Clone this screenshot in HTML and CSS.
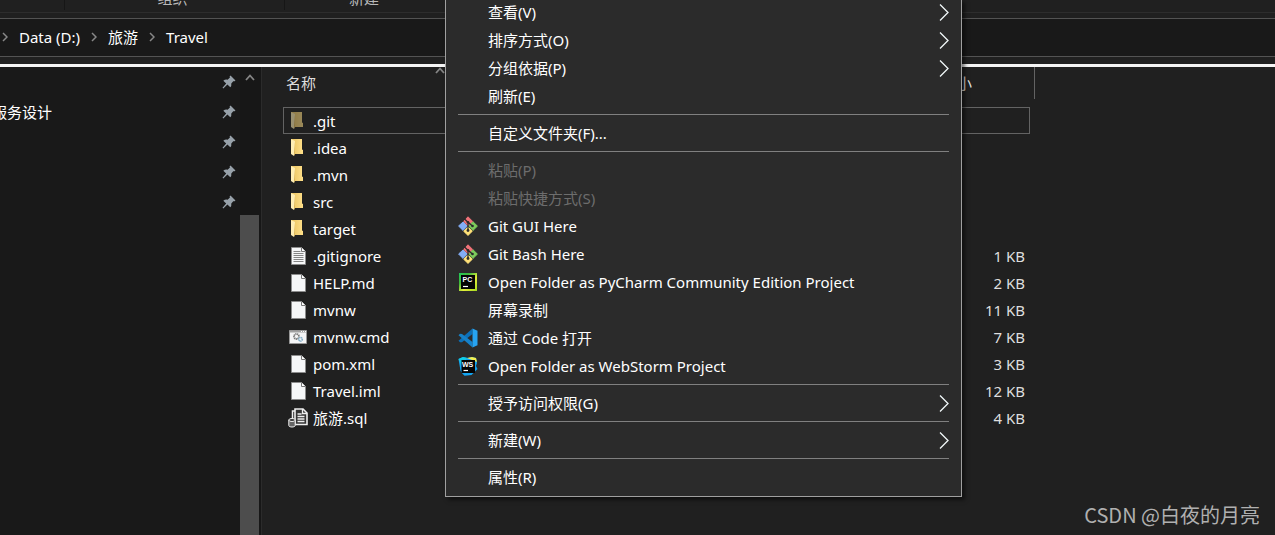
FILE: index.html
```html
<!DOCTYPE html>
<html lang="zh-CN">
<head>
<meta charset="utf-8">
<title>Travel</title>
<link rel="stylesheet" href="styles.css">
</head>
<body>
<svg class="defs" aria-hidden="true">
  <defs>
    <linearGradient id="fold" x1="0" x2="1" y1="0" y2="0"><stop offset="0" stop-color="#e9c25e"/><stop offset="1" stop-color="#ffe08a"/></linearGradient>
    <linearGradient id="pc" x1="0" x2="1" y1="0" y2="1"><stop offset="0" stop-color="#21c95a"/><stop offset=".3" stop-color="#3fb93a"/><stop offset=".6" stop-color="#e4ee3a"/><stop offset="1" stop-color="#a5d920"/></linearGradient>
    <symbol id="i-pin" viewBox="0 0 14 14"><path d="M8.500 .5 13.500 5.500 12 6.500 11.500 6 9.300 8.500Q9.700 10.800 8.300 12.300L5.400 9.600 1.300 13.500 .5 12.800 4.200 8.600 1.300 5.800Q3.400 4 5.600 4.700L8 2.500 7.500 1.700Z" fill="#98a2aa"/></symbol>
    <symbol id="i-folder" viewBox="0 0 12 17"><path d="M0 0h11v10.500l1 .5v4H0z" fill="url(#fold)"/><path d="M0 0 4 2v12L3 17 0 15z" fill="#ffeeb4"/><path d="M4 2v12l-1 3V15z" fill="#d9b04e"/></symbol>
    <symbol id="i-file" viewBox="0 0 15 18"><path d="M.5.5h10l4 4v13H.5z" fill="#f6f7f8" stroke="#8c8c8c"/><path d="M10.500.5v4h4" fill="#fff" stroke="#777"/></symbol>
    <symbol id="i-text" viewBox="0 0 15 18"><use href="#i-file"/><path d="M2.500 4.500h7M2.500 6.500h10M2.500 8.500h10M2.500 10.500h10M2.500 12.500h10M2.500 14.500h10" stroke="#858585"/></symbol>
    <symbol id="i-cmd" viewBox="0 0 18 14"><path d="M.5.5h17v13H.5z" fill="#f4f5f6" stroke="#979797"/><path d="M1 1h16v1.500H1z" fill="#a2a2a2"/><path d="M12 1.500h1M14 1.500h1M16 1.500h1" stroke="#fff"/><circle cx="7.500" cy="6.500" r="2.500" fill="none" stroke="#777" stroke-width="1.800" stroke-dasharray="1.200 .5"/><circle cx="11.500" cy="9.300" r="1.800" fill="none" stroke="#82aec8" stroke-width="1.600" stroke-dasharray="1.200 .4"/></symbol>
    <symbol id="i-sql" viewBox="0 0 20 20"><path d="M7 1h8l4 4v11.500H7z" fill="#333" stroke="#eee" stroke-width="1.600"/><path d="M14.500 1v4.500H19M9.500 6h4M9.500 8.500h7M9.500 11h7M9.500 13.500h7" fill="none" stroke="#eee" stroke-width="1.300"/><path d="M7 3H4.500v8" fill="none" stroke="#eee" stroke-width="1.500"/><path d="M.8 12v5.500c0 2 6.400 2 6.400 0V12z" fill="#666" stroke="#eee"/><ellipse cx="4" cy="12" rx="3.200" ry="1.500" fill="#333" stroke="#eee"/></symbol>
    <symbol id="i-arrow" viewBox="0 0 10 17"><path d="M1 .5 9 8.500 1 16.500" fill="none" stroke="#f2f8fa" stroke-width="1.300"/></symbol>
    <symbol id="i-crumb" viewBox="0 0 6 10"><path d="M1 1 5 5 1 9" fill="none" stroke="#888" stroke-width="1.500"/></symbol>
    <symbol id="i-up" viewBox="0 0 10 7"><path d="M1 6 5 1.500 9 6" fill="none" stroke="#858585" stroke-width="1.800"/></symbol>
    <symbol id="i-git" viewBox="0 0 20 20"><g stroke-linejoin="round" stroke-width="1"><path d="m10 .8 4.600 4.600L10 9.600 5.700 5.400z" fill="#f07278" stroke="#f07278"/><path d="M5 6 9.200 10.200 5 14.400.6 10z" fill="#83adf5" stroke="#83adf5"/><path d="m15 5.800 4.400 4.300-4.400 4.300-4.200-4.300z" fill="#7dcb5c" stroke="#7dcb5c"/><path d="m10 11 4.300 4.200L10 19.400l-4.300-4.200z" fill="#ffe178" stroke="#ffe178"/></g><path d="M6.500 3 10 6.300v8.500M10 6.300 14.500 10" fill="none" stroke="#2b2b2b" stroke-width="1.300"/><circle cx="10" cy="6.300" r="1.300" fill="#2b2b2b"/><circle cx="10" cy="14.500" r="1.400" fill="#2b2b2b"/><circle cx="14.500" cy="10" r="1.300" fill="#2b2b2b"/></symbol>
    <symbol id="i-pc" viewBox="0 0 20 20"><path d="M1 1h18v18H1z" fill="url(#pc)"/><path d="M3 3h14v14H3z" fill="#050505"/><path d="M5 14.500h5" stroke="#fff" stroke-width="1.200"/><text x="4.500" y="9.500" class="logo-text">PC</text></symbol>
    <symbol id="i-code" viewBox="0 0 20 20"><path d="M14.500.5V6L4 14.200l-2 .1L.5 12.800z" fill="#0d70b8"/><path d="M14.500 19.500V14L4 5.900l-2-.1L.5 7.300z" fill="#1681c9"/><path d="M14.500.5 19.500 2.800v14.400l-5 2.300z" fill="#27a4f2"/></symbol>
    <symbol id="i-ws" viewBox="0 0 20 20"><path d="M.5 3 5 1l5 1 4-1 4 1 1 5-1 3 1.500 3-2 2-1 1-3 3-7 .8-2-2-2-3z" fill="#12a5f3"/><path d="m9 2 5-1 4 1 1 4-5-2z" fill="#f4ee50"/><path d="m.5 3 4.500-2 4 1-5 8z" fill="#10cce5"/><path d="M3.500 4h13.500v13H3.500z" fill="#050505"/><path d="M5.500 14.500h4.500" stroke="#fff" stroke-width="1.200"/><text x="4" y="10.500" class="logo-text">WS</text></symbol>
  </defs>
</svg>

<div class="window">
  <header class="ribbon">
    <span class="group group-first"></span>
    <span class="group group-wide">组织</span>
    <span class="group group-last">新建</span>
  </header>
  <nav class="address">
    <svg class="crumb"><use href="#i-crumb"/></svg><a href="#">Data (D:)</a>
    <svg class="crumb"><use href="#i-crumb"/></svg><a href="#">旅游</a>
    <svg class="crumb"><use href="#i-crumb"/></svg><a href="#">Travel</a>
  </nav>
  <div class="body">
    <aside class="sidebar">
      <ul class="pins">
        <li><span></span><svg class="pin"><use href="#i-pin"/></svg></li>
        <li><span class="cut">服务设计</span><svg class="pin"><use href="#i-pin"/></svg></li>
        <li><span></span><svg class="pin"><use href="#i-pin"/></svg></li>
        <li><span></span><svg class="pin"><use href="#i-pin"/></svg></li>
        <li><span></span><svg class="pin"><use href="#i-pin"/></svg></li>
      </ul>
      <div class="scrollbar"><svg class="up"><use href="#i-up"/></svg><div class="thumb"></div></div>
    </aside>
    <main class="files">
      <table>
        <colgroup><col class="col-name"><col><col class="col-size"><col class="col-end"></colgroup>
        <thead><tr><th class="name">名称<svg class="sort"><use href="#i-up"/></svg></th><th></th><th class="size-head" colspan="2">大小</th></tr></thead>
        <tbody>
          <tr class="selected"><td><span class="entry"><svg class="folder dim"><use href="#i-folder"/></svg>.git</span></td><td></td><td></td><td></td></tr>
          <tr><td><span class="entry"><svg class="folder"><use href="#i-folder"/></svg>.idea</span></td><td></td><td></td><td></td></tr>
          <tr><td><span class="entry"><svg class="folder"><use href="#i-folder"/></svg>.mvn</span></td><td></td><td></td><td></td></tr>
          <tr><td><span class="entry"><svg class="folder"><use href="#i-folder"/></svg>src</span></td><td></td><td></td><td></td></tr>
          <tr><td><span class="entry"><svg class="folder"><use href="#i-folder"/></svg>target</span></td><td></td><td></td><td></td></tr>
          <tr><td><span class="entry"><svg class="file"><use href="#i-text"/></svg>.gitignore</span></td><td></td><td class="size">1 KB</td><td></td></tr>
          <tr><td><span class="entry"><svg class="file"><use href="#i-file"/></svg>HELP.md</span></td><td></td><td class="size">2 KB</td><td></td></tr>
          <tr><td><span class="entry"><svg class="file"><use href="#i-file"/></svg>mvnw</span></td><td></td><td class="size">11 KB</td><td></td></tr>
          <tr><td><span class="entry"><svg class="cmd"><use href="#i-cmd"/></svg>mvnw.cmd</span></td><td></td><td class="size">7 KB</td><td></td></tr>
          <tr><td><span class="entry"><svg class="file"><use href="#i-file"/></svg>pom.xml</span></td><td></td><td class="size">3 KB</td><td></td></tr>
          <tr><td><span class="entry"><svg class="file"><use href="#i-file"/></svg>Travel.iml</span></td><td></td><td class="size">12 KB</td><td></td></tr>
          <tr><td><span class="entry"><svg class="sql"><use href="#i-sql"/></svg>旅游.sql</span></td><td></td><td class="size">4 KB</td><td></td></tr>
        </tbody>
      </table>
    </main>
  </div>
</div>

<div class="menu" role="menu">
  <button role="menuitem"><span class="icon"></span><span class="label">查看(V)</span><svg class="arrow"><use href="#i-arrow"/></svg></button>
  <button role="menuitem"><span class="icon"></span><span class="label">排序方式(O)</span><svg class="arrow"><use href="#i-arrow"/></svg></button>
  <button role="menuitem"><span class="icon"></span><span class="label">分组依据(P)</span><svg class="arrow"><use href="#i-arrow"/></svg></button>
  <button role="menuitem"><span class="icon"></span><span class="label">刷新(E)</span></button>
  <hr>
  <button role="menuitem"><span class="icon"></span><span class="label">自定义文件夹(F)...</span></button>
  <hr>
  <button role="menuitem" disabled><span class="icon"></span><span class="label">粘贴(P)</span></button>
  <button role="menuitem" disabled><span class="icon"></span><span class="label">粘贴快捷方式(S)</span></button>
  <button role="menuitem"><svg class="icon"><use href="#i-git"/></svg><span class="label">Git GUI Here</span></button>
  <button role="menuitem"><svg class="icon"><use href="#i-git"/></svg><span class="label">Git Bash Here</span></button>
  <button role="menuitem"><svg class="icon"><use href="#i-pc"/></svg><span class="label">Open Folder as PyCharm Community Edition Project</span></button>
  <button role="menuitem"><span class="icon"></span><span class="label">屏幕录制</span></button>
  <button role="menuitem"><svg class="icon"><use href="#i-code"/></svg><span class="label">通过 Code 打开</span></button>
  <button role="menuitem"><svg class="icon"><use href="#i-ws"/></svg><span class="label">Open Folder as WebStorm Project</span></button>
  <hr>
  <button role="menuitem"><span class="icon"></span><span class="label">授予访问权限(G)</span><svg class="arrow"><use href="#i-arrow"/></svg></button>
  <hr>
  <button role="menuitem"><span class="icon"></span><span class="label">新建(W)</span><svg class="arrow"><use href="#i-arrow"/></svg></button>
  <hr>
  <button role="menuitem"><span class="icon"></span><span class="label">属性(R)</span></button>
</div>
<div class="watermark">CSDN @白夜的月亮</div>
</body>
</html>
```
FILE: styles.css
```css
* { box-sizing: border-box; }
body {
  margin: 0;
  background: #202020;
  color: #fff;
  font: 15px/20px "Noto Sans", "Noto Sans CJK SC", sans-serif;
  overflow: hidden;
}
svg { display: block; flex: none; }
.defs { position: absolute; width: 0; height: 0; }
.logo-text { font: bold 7px "Liberation Sans", sans-serif; fill: #fff; }

.window { display: flex; flex-direction: column; height: 100vh; }

.ribbon {
  display: flex;
  align-items: flex-end;
  height: 13px;
  border-bottom: 1px solid #2d2d2d;
  color: #b8b8b8;
  overflow: hidden;
}
.group { height: 22px; margin-bottom: 2px; text-align: center; border-right: 1px solid #161616; }
.group-first { width: 65px; }
.group-wide { width: 220px; padding-right: 4px; }
.group-last { width: 158px; border: 0; }

.address {
  display: flex;
  align-items: center;
  gap: 11px;
  height: 39px;
  margin: 5px 0 7px;
  padding: 0 0 2px 2px;
  background: #191919;
  border-top: 1px solid #535353;
  border-bottom: 1px solid #535353;
}
.address a { color: #fff; text-decoration: none; }
.crumb { width: 6px; height: 10px; }

.body { display: flex; flex: 1; min-height: 0; border-top: 3px solid #f4f4f4; }
.sidebar { display: flex; flex: none; width: 262px; background: #191919; border-right: 1px solid #2b2b2b; }
.pins { flex: 1; margin: 0; padding: 0; list-style: none; }
.pins li { display: flex; justify-content: space-between; align-items: center; height: 30px; padding-right: 4px; }
.cut { margin-left: -8px; }
.pin { width: 14px; height: 14px; }
.scrollbar { display: flex; flex-direction: column; justify-content: space-between; width: 21px; padding-right: 2px; background: #171717; }
.up { width: 10px; height: 7px; margin: 7px 5px; }
.thumb { height: 320px; background: #4d4d4d; }

.files { flex: 1; padding-left: 21px; }
table { width: 752px; table-layout: fixed; border-collapse: separate; border-spacing: 0; }
.col-name { width: 162px; }
.col-size { width: 88px; }
.col-end { width: 5px; }
th { height: 32px; padding: 0 3px; text-align: left; font-weight: normal; color: #dedede; }
.name { position: relative; }
.sort { position: absolute; top: 0; right: 0; width: 10px; height: 7px; }
.size-head { padding: 0; border-right: 1px solid #636363; }
thead::after { content: ""; display: block; height: 8px; }
td { height: 27px; padding: 0; border: 0 solid transparent; border-width: 1px 0; }
.entry { display: flex; align-items: center; gap: 5px; padding-left: 5px; }
.selected td { border-color: #636363; }
.selected td:first-child { border-left: 1px solid #636363; }
.selected .entry { padding-left: 4px; }
.selected td:nth-child(3) { border-right: 1px solid #636363; }
.selected td:last-child { border-color: transparent; }
.folder { width: 12px; height: 17px; margin: 0 5px 0 3px; }
.dim { opacity: .55; }
.size { padding-right: 5px; text-align: right; color: #dedede; }
.file { width: 15px; height: 18px; margin: 0 2px 0 3px; }
.cmd { width: 18px; height: 14px; margin: 0 1px; }
.sql { width: 20px; height: 20px; }

.menu {
  position: absolute;
  top: -1px;
  left: 445px;
  width: 517px;
  padding: 0 12px 4px;
  background: #2b2b2b;
  border: 1px solid #a0a0a0;
  border-top: 0;
  box-shadow: 3px 3px 4px rgba(0, 0, 0, .5);
}
.menu button {
  display: flex;
  align-items: center;
  gap: 10px;
  width: 100%;
  height: 28px;
  padding: 0 0 2px;
  border: 0;
  background: none;
  color: #fff;
  font: inherit;
  text-align: left;
}
.menu button:disabled { color: #6d6d6d; }
.menu hr { height: 1px; margin: 3px 0 5px; border: 0; background: #808080; }
.icon { flex: none; width: 20px; height: 20px; }
.label { flex: 1; }
.arrow { width: 10px; height: 17px; }

.watermark {
  position: absolute;
  right: 15px;
  bottom: 6px;
  color: #b0b0b0;
  font: 20px/28px "Noto Sans CJK SC", sans-serif;
}
```
